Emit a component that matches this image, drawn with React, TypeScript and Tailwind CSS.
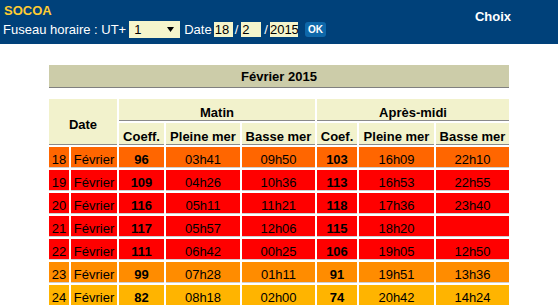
import React from 'react'

type Row = {
  day: number
  coefAm: number
  pmAm: string
  bmAm: string
  coefPm: number
  pmPm: string
  bmPm: string
  bg: string
}

const rows: Row[] = [
  { day: 18, coefAm: 96, pmAm: '03h41', bmAm: '09h50', coefPm: 103, pmPm: '16h09', bmPm: '22h10', bg: 'bg-[#ff6600]' },
  { day: 19, coefAm: 109, pmAm: '04h26', bmAm: '10h36', coefPm: 113, pmPm: '16h53', bmPm: '22h55', bg: 'bg-[#ff0000]' },
  { day: 20, coefAm: 116, pmAm: '05h11', bmAm: '11h21', coefPm: 118, pmPm: '17h36', bmPm: '23h40', bg: 'bg-[#ff0000]' },
  { day: 21, coefAm: 117, pmAm: '05h57', bmAm: '12h06', coefPm: 115, pmPm: '18h20', bmPm: '', bg: 'bg-[#ff0000]' },
  { day: 22, coefAm: 111, pmAm: '06h42', bmAm: '00h25', coefPm: 106, pmPm: '19h05', bmPm: '12h50', bg: 'bg-[#ff0000]' },
  { day: 23, coefAm: 99, pmAm: '07h28', bmAm: '01h11', coefPm: 91, pmPm: '19h51', bmPm: '13h36', bg: 'bg-[#ff8c00]' },
  { day: 24, coefAm: 82, pmAm: '08h18', bmAm: '02h00', coefPm: 74, pmPm: '20h42', bmPm: '14h24', bg: 'bg-[#ffb400]' },
]

const head = 'bg-[#f2f2cc] border-b border-[#8a8a8a] flex items-end justify-center font-bold leading-[15px]'

function Cell({ bg, bold, children }: { bg: string; bold?: boolean; children?: React.ReactNode }) {
  return (
    <div className={`${bg} h-[21px] border-b border-[#cfcfcf] flex items-end justify-center leading-[15px] ${bold ? 'font-bold' : ''}`}>
      {children}
    </div>
  )
}

export default function App() {
  return (
    <div className="w-[558px] h-[305px] overflow-hidden bg-white text-[13px] text-black" style={{ fontFamily: '"Liberation Sans", Arial, sans-serif' }}>
      {/* Top bar */}
      <div className="h-[44px] bg-[#00417a] flex justify-between">
        <div className="pl-[3px] pt-[3px]">
          <div className="pl-[1px] font-bold text-[#ffcc33] leading-[15px]">SOCOA</div>
          <div className="mt-[3px] h-[17px] flex items-center text-white">
            <span className="leading-[15px]">Fuseau horaire : UT+</span>
            <div className="ml-[3px] w-[51px] h-[17px] bg-[#f5f5cc] text-black flex items-center justify-between pl-[5px] pr-[6px]">
              <span className="leading-[15px]">1</span>
              <svg width="7" height="5" viewBox="0 0 7 5">
                <path d="M0 0 H7 L3.5 5 Z" fill="#000" />
              </svg>
            </div>
            <span className="ml-[4px] leading-[15px]">Date</span>
            <div className="ml-[2px] w-[19px] h-[15px] bg-[#f5f5cc] text-black leading-[15px] pl-[1px]">18</div>
            <span className="mx-[2px] leading-[15px]">/</span>
            <div className="ml-[1px] w-[20px] h-[15px] bg-[#f5f5cc] text-black leading-[15px] pl-[1px]">2</div>
            <span className="ml-[3px] mr-[2px] leading-[15px]">/</span>
            <div className="w-[28px] h-[15px] bg-[#f5f5cc] text-black leading-[15px]">2015</div>
            <div className="ml-[7px] w-[21px] h-[15px] rounded-[3px] bg-[#0e68aa] text-white text-[10px] font-bold flex items-center justify-center">OK</div>
          </div>
        </div>
        <div className="pt-[9px] pr-[47px] font-bold text-white leading-[15px]">Choix</div>
      </div>

      {/* Month table */}
      <div className="w-[460px] mx-auto mt-[21px]">
        <div className="h-[23px] bg-[#cccca9] border-b border-[#808080] flex items-center justify-center font-bold leading-[15px]">
          Février 2015
        </div>

        <div className="mt-[11px] grid grid-cols-[20px_46px_45px_74px_73px_40px_75px_73px] gap-[2px]">
          <div className="col-span-2 row-span-2 bg-[#f2f2cc] border-b border-[#8a8a8a] flex items-center justify-center font-bold leading-[15px] pt-[6px]">
            Date
          </div>
          <div className={`col-span-3 h-[22px] ${head}`}>Matin</div>
          <div className={`col-span-3 h-[22px] ${head}`}>Après-midi</div>
          <div className={`h-[22px] ${head}`}>Coeff.</div>
          <div className={`h-[22px] ${head}`}>Pleine mer</div>
          <div className={`h-[22px] ${head}`}>Basse mer</div>
          <div className={`h-[22px] ${head}`}>Coef.</div>
          <div className={`h-[22px] ${head}`}>Pleine mer</div>
          <div className={`h-[22px] ${head}`}>Basse mer</div>

          {rows.map((r) => (
            <React.Fragment key={r.day}>
              <Cell bg={r.bg}>{r.day}</Cell>
              <Cell bg={r.bg}>Février</Cell>
              <Cell bg={r.bg} bold>{r.coefAm}</Cell>
              <Cell bg={r.bg}>{r.pmAm}</Cell>
              <Cell bg={r.bg}>{r.bmAm}</Cell>
              <Cell bg={r.bg} bold>{r.coefPm}</Cell>
              <Cell bg={r.bg}>{r.pmPm}</Cell>
              <Cell bg={r.bg}>{r.bmPm}</Cell>
            </React.Fragment>
          ))}
        </div>
      </div>
    </div>
  )
}
